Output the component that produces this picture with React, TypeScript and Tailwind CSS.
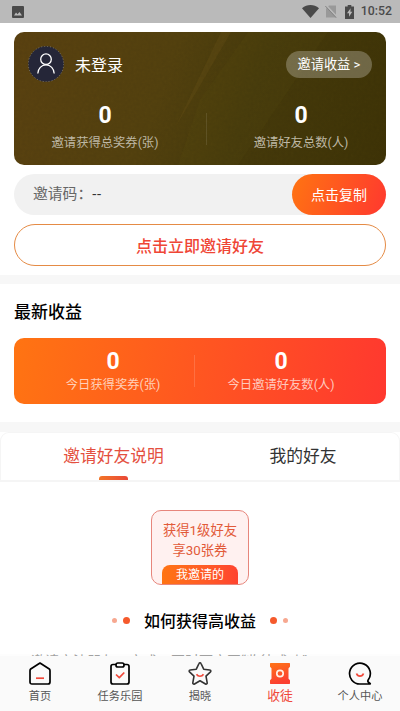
import React from 'react';

const cardStats = [
  { label: '邀请获得总奖券(张)', value: 0 },
  { label: '邀请好友总数(人)', value: 0 },
];

function StatusBar() {
  return (
    <div className="flex h-[23px] items-center bg-[#bababa] pl-3 pr-2 text-[#4a4a4a]">
      <svg width="12" height="12" viewBox="0 0 12 12" className="text-[#4a4a4a]">
        <rect width="12" height="12" rx="1" fill="currentColor" />
        <path d="M2 9.5 4 6.5 5.5 8.3 7.5 6 10 9.5z" fill="#bababa" />
      </svg>
      <svg width="17" height="13" viewBox="0 0 17 13" className="ml-auto">
        <path d="M0 3.2C5-1 12-1 17 3.2L8.5 13z" fill="currentColor" />
      </svg>
      <svg width="12" height="13" viewBox="0 0 12 13" className="ml-1.5">
        <path d="M4 .5h7v12H1v-9z" fill="#999" />
        <path d="M1 .2 12 12" stroke="#bababa" strokeWidth="1.6" />
        <path d="M.3 1 11.2 12.7" stroke="#858585" />
      </svg>
      <svg width="9" height="14" viewBox="0 0 9 14" className="ml-2">
        <path d="M2.7 0h3.6v1.4H9V14H0V1.4h2.7z" fill="currentColor" />
        <path d="M5.6 3.2 2 8.2h2v3.6l3.3-5H5.4z" fill="#bababa" />
      </svg>
      <span className="ml-[7px] font-[Roboto] text-[12.3px] leading-none font-medium">10:52</span>
    </div>
  );
}

function InviteCard() {
  return (
    <section className="relative mx-3.5 mt-[9px] h-[133px] overflow-hidden rounded-[10px] bg-[linear-gradient(110deg,#5b4211_0%,#54420f_40%,#473b0c_62%,#3f3407_100%)] text-white">
      {/* leather grain and light streaks */}
      <svg width="372" height="133" className="absolute inset-0">
        <filter id="grain">
          <feTurbulence type="fractalNoise" baseFrequency="0.35" numOctaves="2" />
          <feColorMatrix values="0 0 0 0 0  0 0 0 0 0  0 0 0 0 0  0 0 0 .3 -.06" />
        </filter>
        <path d="M234 0h80l-90 133h-60l22-65z" fill="#6f611c" opacity=".08" />
        <path d="M207 0h10l-30 52-25 42z" fill="#8b6923" opacity=".14" />
        <rect width="372" height="133" filter="url(#grain)" opacity=".25" />
      </svg>
      <div className="relative flex items-center px-3.5 pt-3.5">
        <svg width="36" height="36" viewBox="0 0 36 36">
          <circle cx="18" cy="18" r="17.8" fill="#252638" />
          <circle cx="18" cy="18" r="17.7" fill="none" stroke="#a5a197" strokeWidth=".6" strokeDasharray="1 2" />
          <g fill="none" stroke="#fff" strokeWidth="1.3">
            <circle cx="18" cy="13.2" r="5.3" />
            <path d="M9.8 27.5c.3-5 3.5-8.6 8.2-8.6s7.900 3.600 8.200 8.600" />
          </g>
        </svg>
        <span className="ml-[11px] pt-[3px] text-base leading-6">未登录</span>
        <button className="ml-auto h-[27px] w-[86px] rounded-full bg-white/25 text-[13.2px] leading-7">邀请收益 &gt;</button>
      </div>
      <div className="relative mt-5 flex items-center">
        {cardStats.map((stat, i) => (
          <React.Fragment key={stat.label}>
            {i > 0 && <i className="ml-2.5 h-8 w-px shrink-0 bg-white/10" />}
            <div className={i ? 'w-[188px] shrink-0 text-center' : 'w-[182px] shrink-0 text-center'}>
              <div className="font-[Roboto] text-[23px] leading-7 font-bold">{stat.value}</div>
              <div className="mt-px text-[12.3px] leading-6 text-[#bdb7a4]">{stat.label}</div>
            </div>
          </React.Fragment>
        ))}
      </div>
    </section>
  );
}

function Earnings() {
  return (
    <section className="h-[138px] px-3.5 pt-3.5">
      <h2 className="text-[17px] leading-7 font-medium text-black">最新收益</h2>
      <div className="mt-3 flex h-[66px] items-center rounded-[10px] bg-[linear-gradient(100deg,#ff7412,#ff382f)] text-center text-white">
        <div className="w-[180px] pl-[18px]">
          <div className="font-[Roboto] text-[23px] leading-7 font-bold">0</div>
          <div className="text-[12.3px] leading-[18px] text-[#ffcfb8]">今日获得奖券(张)</div>
        </div>
        <i className="h-8 w-px bg-white/15" />
        <div className="w-[172px]">
          <div className="font-[Roboto] text-[23px] leading-7 font-bold">0</div>
          <div className="text-[12.3px] leading-[18px] text-[#ffc8bd]">今日邀请好友数(人)</div>
        </div>
      </div>
    </section>
  );
}

function Tabs() {
  return (
    <div className="flex h-[50px] rounded-t-[9px] border border-b-2 border-[#f5f5f5] bg-white text-[16.8px] leading-[47px]">
      <div className="flex w-[225px] flex-col items-center text-[#e4503f]">
        <span className="h-[43px]">邀请好友说明</span>
        <i className="h-1 w-[29px] rounded-t-[3px] bg-linear-to-r from-[#f27425] to-[#e94737]" />
      </div>
      <span className="flex-1 pr-[19px] text-center text-[#333]">我的好友</span>
    </div>
  );
}

function HomeIcon() {
  return (
    <svg width="24" height="24" viewBox="0 0 24 24" fill="none" strokeWidth="1.7" strokeLinejoin="round">
      <path d="M2.700 7 12 1l9.300 6c.6.500.7.900.7 1.800v11.200c0 1.300-.7 2-2 2H4c-1.300 0-2-.7-2-2V8.800c0-.9.100-1.300.7-1.800z" stroke="#000" />
      <path d="M8 16.200h8" stroke="#f0493b" />
    </svg>
  );
}

function TaskIcon() {
  return (
    <svg width="24" height="24" viewBox="0 0 24 24" fill="none" strokeWidth="1.7" strokeLinejoin="round">
      <path d="M8 2.500H5C3.500 2.500 3 3 3 4.500V20c0 1.300.7 2 2 2h14c1.300 0 2-.7 2-2V4.500c0-1.500-.5-2-2-2h-3" stroke="#000" />
      <rect x="8" y="1" width="8" height="4" rx="1.800" stroke="#000" />
      <path d="m8 12.500 3.300 3.200 5-5.200" stroke="#f0493b" />
    </svg>
  );
}

function StarIcon() {
  return (
    <svg width="24" height="24" viewBox="0 0 24 24" fill="none" strokeWidth="1.600" strokeLinejoin="round">
      <path d="M11 1.500c.4-.9 1.600-.9 2 0l2.700 5.700 6.100.8c1 .1 1.400 1.200.7 1.900l-4.500 4.300 1.200 6.600c.2 1-.8 1.700-1.700 1.200L12 18.800 6.500 22c-.9.500-1.900-.2-1.700-1.200L6 14.200 1.500 9.900c-.7-.7-.3-1.800.7-1.900l6.100-.8z" stroke="#333" />
      <path d="M8.500 12.300c1.600 2.600 5.400 2.600 7 0" stroke="#f0493b" strokeWidth="1.700" />
    </svg>
  );
}

function TicketIcon() {
  return (
    <svg width="24" height="24" viewBox="0 0 24 24">
      <defs>
        <linearGradient id="ticket" x1="0" y1="0" x2=".3" y2="1">
          <stop stopColor="#ff7416" />
          <stop offset="1" stopColor="#fb3f31" />
        </linearGradient>
      </defs>
      <path d="M3 1h18c.8 0 1 .3 1 1v2.500c0 1-1.500 1-1.500 2v10c0 1 1.500 1 1.500 2V21c0 .7-.2 1-1 1H3c-.8 0-1-.3-1-1v-2.500c0-1 1.500-1 1.500-2v-10c0-1-1.500-1-1.500-2V2c0-.7.2-1 1-1z" fill="url(#ticket)" />
      <circle cx="12" cy="11.500" r="3.200" fill="none" stroke="#fff0e5" strokeWidth="1.700" />
    </svg>
  );
}

function ProfileIcon() {
  return (
    <svg width="24" height="24" viewBox="0 0 24 24" fill="none" strokeWidth="1.700">
      <path d="M22.800 22H12A10.400 10.400 0 1 1 20.300 17.800c-.9 1.300-.7 2.500 2.500 4.200" stroke="#000" />
      <path d="M8.500 11.500c1.300 3.600 5.700 3.600 7 0" stroke="#f0493b" />
    </svg>
  );
}

const navItems = [
  { label: '首页', icon: HomeIcon },
  { label: '任务乐园', icon: TaskIcon },
  { label: '揭晓', icon: StarIcon },
  { label: '收徒', icon: TicketIcon, active: true },
  { label: '个人中心', icon: ProfileIcon },
];

function BottomNav() {
  return (
    <nav className="relative grid h-[55px] shrink-0 grid-cols-5 bg-[#fafafa] shadow-[0_-2px_0_rgba(250,250,250,0.4)]">
      {navItems.map(({ label, icon: Icon, active }) => (
        <div key={label} className="flex flex-col items-center pt-1.5">
          <Icon />
          <span className={active ? 'text-[12.8px] leading-5 text-[#f0493b]' : 'text-[11.200px] leading-[21px] text-[#555]'}>{label}</span>
        </div>
      ))}
    </nav>
  );
}

export default function App() {
  return (
    <div className="flex h-[711px] w-[400px] flex-col overflow-hidden bg-white font-[Roboto,'Noto_Sans_CJK_SC',sans-serif]">
      <StatusBar />
      <main className="min-h-0 flex-1 overflow-hidden">
        <InviteCard />
        <div className="mx-3.5 mt-[9px] flex h-[41px] rounded-full bg-[#f1f1f1] pl-[19px] text-[14.800px] leading-[41px] text-[#666]">
          <span>邀请码：</span>
          <span className="tracking-[0.8px] text-[#333]">--</span>
          <button className="ml-auto w-[94px] rounded-full bg-[linear-gradient(110deg,#ff7412,#ff382f)] text-[14px] leading-[43px] text-white">点击复制</button>
        </div>
        <button className="mx-3.5 mt-[9px] block h-[42px] w-[372px] rounded-full border border-[#e58b45] pt-[3px] text-base font-medium text-[#ef4636]">点击立即邀请好友</button>
        <div className="mt-[9px] h-[9px] bg-[#f7f7f7]" />
        <Earnings />
        <div className="h-[10px] bg-[#f7f7f7]" />
        <Tabs />
        <div className="mx-auto mt-7 flex h-[75px] w-[98px] flex-col items-center rounded-[10px] border border-[#e7867c] bg-[#fff1f0] pt-2.5 text-[13.300px] leading-5 text-[#e25a39]">
          <span>获得1级好友</span>
          <span>享30张券</span>
          <span className="mt-auto h-[19px] w-[76px] rounded-t-[8px] bg-linear-to-r from-[#ff7412] to-[#ff432f] text-center text-xs leading-[21px] text-white">我邀请的</span>
        </div>
        <div className="mt-6 flex items-center justify-center">
          <i className="-mt-0.5 size-[5px] rounded-full bg-[#f7a890]" />
          <i className="-mt-0.5 ml-1.5 size-[7px] rounded-full bg-[#f55a2c]" />
          <h3 className="mx-3.5 pt-px text-base leading-6 font-medium text-black">如何获得高收益</h3>
          <i className="-mt-0.5 size-[7px] rounded-full bg-[#f55a2c]" />
          <i className="-mt-0.5 ml-1.5 size-[5px] rounded-full bg-[#f7a890]" />
        </div>
        <p className="mt-[17px] pl-[31px] text-[14px] leading-5 whitespace-nowrap text-[#666]">邀请方法朋友一方式，不时下方图“收徒成功”</p>
      </main>
      <BottomNav />
    </div>
  );
}
